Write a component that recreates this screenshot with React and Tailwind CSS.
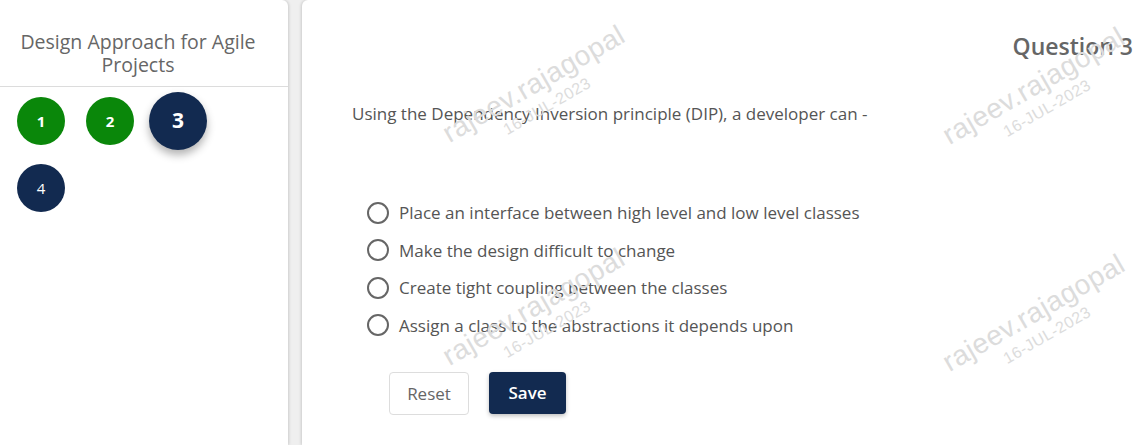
const OPTIONS = [
  'Place an interface between high level and low level classes',
  'Make the design difficult to change',
  'Create tight coupling between the classes',
  'Assign a class to the abstractions it depends upon',
]

function Watermark({ className }) {
  return (
    <div className={`pointer-events-none absolute select-none ${className}`}>
      <div className="relative -rotate-[30deg] origin-left text-[#dcdcdc]" style={{ fontFamily: '"Liberation Sans", Arial, sans-serif' }}>
        <div className="text-[28px] leading-none tracking-[0.5px]">rajeev.rajagopal</div>
        <div className="text-[16px] leading-none ml-[54px] mt-[4px] tracking-[0.5px]">16-JUL-2023</div>
      </div>
    </div>
  )
}

export default function App() {
  return (
    <div className="flex h-[445px] w-[1144px] overflow-hidden bg-[#efefef]" style={{ fontFamily: '"Open Sans", "Noto Sans", sans-serif' }}>
      {/* left nav */}
      <div className="w-[288px] shrink-0 bg-white rounded-tr-[6px] shadow-[1px_0_3px_rgba(0,0,0,0.15)]">
        <div className="h-[87px] border-b border-[#dcdcdc] pt-[30px] pl-[4px] pr-[16px] text-center text-[19.5px] leading-[23px] text-[#666]">
          Design Approach for Agile Projects
        </div>
        <div className="pl-[17px] pt-[5px]">
          <div className="flex items-center gap-[21px] h-[58px]">
            <div className="flex h-[48px] w-[48px] items-center justify-center rounded-full bg-[#0a870a] text-[15px] font-bold text-white">1</div>
            <div className="flex h-[48px] w-[48px] items-center justify-center rounded-full bg-[#0a870a] text-[15px] font-bold text-white">2</div>
            <div className="-ml-[6px] flex h-[58px] w-[58px] items-center justify-center rounded-full bg-[#122a50] text-[21px] font-bold text-white shadow-[0_5px_8px_rgba(0,0,0,0.3)]">3</div>
          </div>
          <div className="mt-[14px] flex h-[48px] w-[48px] items-center justify-center rounded-full bg-[#122a50] text-[15px] text-white">4</div>
        </div>
      </div>

      {/* question panel */}
      <div className="relative ml-[14px] flex-1 bg-white rounded-tl-[6px] shadow-[-1px_0_3px_rgba(0,0,0,0.15)]">
        <div className="flex justify-end pr-[11px] pt-[31px] text-[23px] font-semibold leading-[30px] text-[#666]">Question 3</div>
        <div className="pl-[50px] pt-[42px] text-[17px] leading-[22px] text-[#555]">
          Using the Dependency Inversion principle (DIP), a developer can -
        </div>
        <div className="flex flex-col pl-[65px] pt-[69px]">
          {OPTIONS.map(opt => (
            <label key={opt} className="flex h-[37.5px] items-center gap-[10px] text-[17px] text-[#555]">
              <span className="h-[22px] w-[22px] shrink-0 rounded-full border-2 border-[#666]" />
              {opt}
            </label>
          ))}
        </div>
        <div className="flex gap-[20px] pl-[87px] pt-[28px]">
          <button className="h-[43px] w-[80px] rounded-[4px] border border-[#ddd] bg-white text-[17px] text-[#666]">Reset</button>
          <button className="h-[42px] w-[77px] rounded-[4px] bg-[#122a50] text-[17px] font-semibold text-white shadow-[0_2px_4px_rgba(0,0,0,0.25)]">Save</button>
        </div>

        <Watermark className="left-[148px] top-[120px]" />
        <Watermark className="left-[648px] top-[122px]" />
        <Watermark className="left-[148px] top-[343px]" />
        <Watermark className="left-[648px] top-[349px]" />
      </div>
    </div>
  )
}
